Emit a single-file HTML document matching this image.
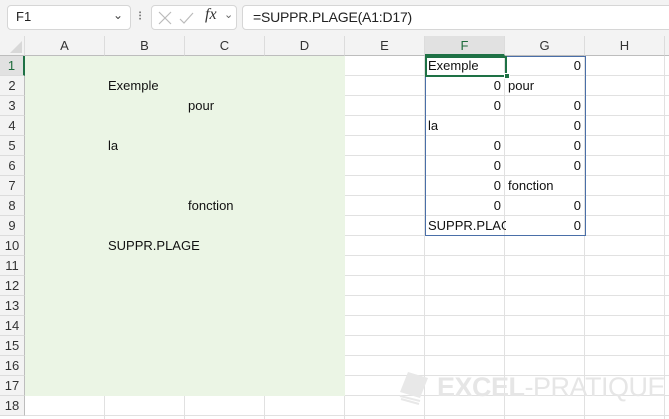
<!DOCTYPE html><html><head><style>
*{margin:0;padding:0;box-sizing:border-box}
body{width:669px;height:419px;overflow:hidden;background:#fff;font-family:"Liberation Sans",sans-serif;position:relative;font-size:13px;color:#222}
.a{position:absolute}
.tb{left:0;top:0;width:669px;height:36px;background:#f3f3f3}
.box{background:#fff;border:1px solid #d6d6d6;border-radius:4px}
.grid{left:25px;top:56px;width:644px;height:363px;
background-image:repeating-linear-gradient(to right,transparent 0 79px,#e1e1e1 79px 80px),repeating-linear-gradient(to bottom,transparent 0 19px,#e1e1e1 19px 20px)}
.green{left:25px;top:56px;width:320px;height:340px;background:#ebf5e5}
.ch{top:36px;height:20px;width:80px;text-align:center;line-height:20px;color:#333;font-size:13px;border-right:1px solid #dcdcdc;background:#f3f3f3;border-bottom:1px solid #bdbdbd}
.rh{left:0;width:25px;height:20px;text-align:center;line-height:20px;color:#333;font-size:13px;background:#f3f3f3;border-bottom:1px solid #dcdcdc;border-right:1px solid #bdbdbd}
.t{height:20px;line-height:20px;font-size:13px;color:#111;white-space:nowrap;overflow:hidden}
.r{text-align:right;width:76px}
</style></head><body>
<div class="a tb"></div>
<div class="a box" style="left:7px;top:5px;width:124px;height:25px"></div>
<div class="a" style="left:16px;top:9px;font-size:13px">F1</div>
<div class="a" style="left:113px;top:8px;font-size:12px;color:#444">⌄</div>
<div class="a" style="left:138px;top:8px;font-size:13px;color:#555">⁝</div>
<div class="a box" style="left:151px;top:5px;width:86px;height:25px"></div>
<svg class="a" style="left:158px;top:10px" width="40" height="16"><path d="M1 2L13 14M13 2L1 14" stroke="#bbb" stroke-width="1.2"/><path d="M22 9L26 13L35 3" stroke="#bbb" stroke-width="1.2" fill="none"/></svg>
<div class="a" style="left:205px;top:6px;font-family:'Liberation Serif',serif;font-style:italic;font-size:16px;color:#333">fx</div>
<div class="a" style="left:224px;top:8px;font-size:11px;color:#666">⌄</div>
<div class="a box" style="left:242px;top:5px;width:440px;height:25px"></div>
<div class="a" style="left:253px;top:9px;font-size:14px;letter-spacing:-0.2px">=SUPPR.PLAGE(A1:D17)</div>

<div class="a grid"></div>
<div class="a green"></div>
<div class="a" style="left:0;top:36px;width:25px;height:20px;background:#f3f3f3;border-bottom:1px solid #bdbdbd;border-right:1px solid #dcdcdc"></div>
<svg class="a" style="left:10px;top:41px" width="12" height="12"><path d="M12 0L12 12L0 12Z" fill="#d8d8d8"/></svg>
<div class="a ch" style="left:25px">A</div><div class="a ch" style="left:105px">B</div><div class="a ch" style="left:185px">C</div><div class="a ch" style="left:265px">D</div><div class="a ch" style="left:345px">E</div><div class="a ch" style="left:425px;background:#e1e1e1;color:#1e6b3c;border-bottom:2px solid #1e7145">F</div><div class="a ch" style="left:505px">G</div><div class="a ch" style="left:585px">H</div><div class="a ch" style="left:665px"></div>
<div class="a rh" style="top:56px;background:#e1e1e1;color:#1e6b3c;border-right:2px solid #1e7145">1</div>
<div class="a rh" style="top:76px">2</div><div class="a rh" style="top:96px">3</div><div class="a rh" style="top:116px">4</div><div class="a rh" style="top:136px">5</div><div class="a rh" style="top:156px">6</div><div class="a rh" style="top:176px">7</div><div class="a rh" style="top:196px">8</div><div class="a rh" style="top:216px">9</div><div class="a rh" style="top:236px">10</div><div class="a rh" style="top:256px">11</div><div class="a rh" style="top:276px">12</div><div class="a rh" style="top:296px">13</div><div class="a rh" style="top:316px">14</div><div class="a rh" style="top:336px">15</div><div class="a rh" style="top:356px">16</div><div class="a rh" style="top:376px">17</div><div class="a rh" style="top:396px">18</div>

<div class="a t" style="left:108px;top:76px">Exemple</div>
<div class="a t" style="left:188px;top:96px">pour</div>
<div class="a t" style="left:108px;top:136px">la</div>
<div class="a t" style="left:188px;top:196px">fonction</div>
<div class="a t" style="left:108px;top:236px">SUPPR.PLAGE</div>

<div class="a" style="left:425px;top:56px;width:161px;height:180px;border:1px solid #4a6fa8"></div>
<div class="a" style="left:425px;top:56px;width:82px;height:21px;border:2px solid #1e7145"></div>
<div class="a" style="left:504px;top:73px;width:6px;height:6px;background:#1e7145;border:1px solid #fff"></div>
<div class="a t" style="left:428px;top:56px">Exemple</div>
<div class="a t r" style="left:505px;top:56px">0</div>
<div class="a t r" style="left:425px;top:76px">0</div><div class="a t" style="left:508px;top:76px">pour</div>
<div class="a t r" style="left:425px;top:96px">0</div><div class="a t r" style="left:505px;top:96px">0</div>
<div class="a t" style="left:428px;top:116px">la</div><div class="a t r" style="left:505px;top:116px">0</div>
<div class="a t r" style="left:425px;top:136px">0</div><div class="a t r" style="left:505px;top:136px">0</div>
<div class="a t r" style="left:425px;top:156px">0</div><div class="a t r" style="left:505px;top:156px">0</div>
<div class="a t r" style="left:425px;top:176px">0</div><div class="a t" style="left:508px;top:176px">fonction</div>
<div class="a t r" style="left:425px;top:196px">0</div><div class="a t r" style="left:505px;top:196px">0</div>
<div class="a t" style="left:428px;top:216px;width:78px">SUPPR.PLAGE</div><div class="a t r" style="left:505px;top:216px">0</div>

<svg class="a" style="left:398px;top:370px" width="40" height="40"><path d="M10 2L30 8L22 28L2 22Z" fill="#e8e8e8"/><path d="M2 26L22 31M3 29L21 34" stroke="#e8e8e8" stroke-width="2"/></svg>
<div class="a" style="left:437px;top:372px;font-size:27px;line-height:30px;color:#e6e6e6;white-space:nowrap;letter-spacing:-0.5px"><b>EXCEL</b>-PRATIQUE</div>
</body></html>
